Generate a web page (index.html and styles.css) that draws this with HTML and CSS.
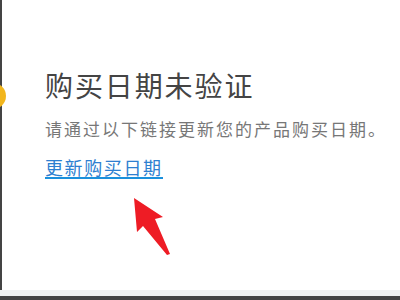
FILE: index.html
```html
<!DOCTYPE html>
<html lang="zh-CN">
<head>
    <meta charset="utf-8">
    <title>购买日期未验证</title>
    <link rel="stylesheet" href="styles.css">
</head>
<body>
    <div class="page">
        <div class="main">
            <!-- status icon, only its edge shows -->
            <div class="status-dot"></div>

            <h1 class="title">购买日期未验证</h1>
            <p class="desc">请通过以下链接更新您的产品购买日期。</p>
            <p class="action"><a class="link" href="#">更新购买日期</a></p>

            <!-- red hint arrow -->
            <svg class="arrow" width="40" height="60" viewBox="0 0 40 60">
                <polygon points="1,1 30,20 22,22 37,57 34,58 10,29 4,35" fill="#ee1c25"/>
            </svg>
        </div>
        <div class="footer"></div>
    </div>
</body>
</html>
```

FILE: styles.css
```css
html, body {
    margin: 0;
    padding: 0;
    background: #fff;
    font-family: "Noto Sans CJK SC", "Noto Sans", sans-serif;
}

.page {
    width: 400px;
    height: 300px;
    display: flex;
    flex-direction: column;
    overflow: hidden;
}

.main {
    flex: 1;
    position: relative;
    border-left: 2px solid #444;
    padding: 71px 0 0 43px;
}

.status-dot {
    position: absolute;
    left: -22px;
    top: 83px;
    width: 26px;
    height: 26px;
    border-radius: 50%;
    background: #f2b61d;
}

.title {
    margin: 0;
    font-size: 28px;
    line-height: 28px;
    font-weight: normal;
    letter-spacing: 1.9px;
    color: #444;
}

.desc {
    margin: 21px 0 0;
    font-size: 17px;
    line-height: 17px;
    letter-spacing: 2px;
    color: #777;
}

.action {
    margin: 21px 0 0;
    font-size: 18px;
    line-height: 18px;
}

.link {
    display: inline-block;
    color: #2f7fd0;
    text-decoration: none;
    letter-spacing: 1.6px;
    padding-bottom: 1px;
    border-bottom: 2px solid #1b90dc;
}

.arrow {
    position: absolute;
    left: 131px;
    top: 197px;
}

.footer {
    height: 6px;
    border-bottom: 4px solid #444;
    background: #f0f2f2;
}
```
